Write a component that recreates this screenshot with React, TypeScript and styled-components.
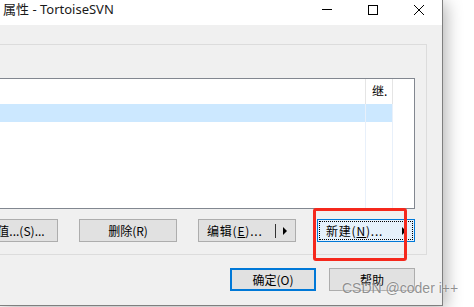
import React from 'react';
import styled, {createGlobalStyle} from 'styled-components';

const GlobalStyle = createGlobalStyle`
  html, body {
    margin: 0;
    padding: 0;
    background: #ffffff;
    overflow: hidden;
  }
  body {
    font-family: "Noto Sans", "Noto Sans CJK SC", sans-serif;
    color: #000;
  }
`

const Screen = styled.div`
  position: relative;
  width: 474px;
  height: 307px;
  overflow: hidden;
  background: #ffffff;
`

const Window = styled.section`
  display: flex;
  flex-direction: column;
  width: 443px;
  height: 306px;
  box-sizing: border-box;
  overflow: hidden;
  background: #f0f0f0;
  border-right: 1px solid #7f7f7f;
  border-bottom: 1px solid #7f7f7f;
  box-shadow: 3px 3px 16px rgba(0, 0, 0, 0.3);
`

const TitleBar = styled.header`
  display: flex;
  align-items: flex-start;
  height: 25px;
  flex-shrink: 0;
  background: #ffffff;
`

const Title = styled.h1`
  flex: 1;
  margin: 0 0 0 3px;
  font-size: 13px;
  font-weight: normal;
  line-height: 19px;
  color: #1a1a1a;
  font-family: "Noto Sans", "Noto Sans CJK SC", sans-serif;
`

const Caption = styled.button`
  display: flex;
  align-items: center;
  justify-content: center;
  width: 46px;
  height: 19px;
  padding: 0;
  border: 0;
  background: transparent;
`

const Body = styled.div`
  display: flex;
  flex-direction: column;
  flex: 1;
  padding: 19px 0 14px 0;
`

const GroupBox = styled.fieldset`
  display: flex;
  flex-direction: column;
  gap: 10px;
  height: 211px;
  box-sizing: border-box;
  margin: 0 15px 0 0;
  padding: 33px 11px 12px 0;
  border: 1px solid #dcdcdc;
  border-left: none;
  min-width: 0;
`

const ListBox = styled.div`
  display: flex;
  flex-direction: column;
  height: 131px;
  box-sizing: border-box;
  background: #ffffff;
  border: 1px solid #828790;
  border-left: none;
`

const GridRow = styled.div<{ $height?: number; $grow?: boolean }>`
  display: grid;
  grid-template-columns: 1fr 27px 21px;
  height: ${p => (p.$height ? `${p.$height}px` : 'auto')};
  flex: ${p => (p.$grow ? 1 : 'none')};
`

const HeaderCell = styled.div<{ $line?: boolean }>`
  display: flex;
  align-items: center;
  padding: 0 0 2px 6px;
  box-sizing: border-box;
  font-size: 12px;
  font-family: "Noto Sans CJK SC", sans-serif;
  border-right: ${p => (p.$line ? '1px solid #e5e5e5' : 'none')};
`

const Cell = styled.div<{ $selected?: boolean; $line?: boolean }>`
  box-sizing: border-box;
  background: ${p => (p.$selected ? '#cce8ff' : 'transparent')};
  border-right: ${p => (p.$line ? '1px solid #e8f0fa' : 'none')};
`

const ButtonRow = styled.div<{ $gap: number; $right?: number; $top?: number }>`
  display: flex;
  justify-content: flex-end;
  gap: ${p => p.$gap}px;
  margin-right: ${p => p.$right ?? 0}px;
  margin-top: ${p => p.$top ?? 0}px;
`

const Button = styled.button<{ $width: number; $tone?: 'default' | 'focus' | 'hot' }>`
  display: flex;
  align-items: center;
  justify-content: center;
  flex-shrink: 0;
  width: ${p => p.$width}px;
  height: 23px;
  box-sizing: border-box;
  padding: 0;
  font-size: 12px;
  font-family: "Noto Sans CJK SC", sans-serif;
  color: #000;
  white-space: nowrap;
  background: ${p => (p.$tone === 'hot' ? '#e5f1fb' : '#e1e1e1')};
  border: ${p =>
    p.$tone === 'focus' ? '2px solid #0078d7' : p.$tone === 'hot' ? '1px solid #0078d7' : '1px solid #adadad'};
  outline: ${p => (p.$tone === 'hot' ? '1px dotted #000' : 'none')};
  outline-offset: -3px;
`

const SplitLabel = styled.span`
  flex: 1;
  text-align: left;
  padding-left: 8px;
  letter-spacing: 0.8px;
`

const SplitBar = styled.span<{ $hidden?: boolean }>`
  width: 1px;
  height: 14px;
  margin-right: 7px;
  background: ${p => (p.$hidden ? 'transparent' : '#333')};
`

const Arrow = styled.span`
  width: 0;
  height: 0;
  margin-right: 8px;
  border-left: 4px solid #000;
  border-top: 4px solid transparent;
  border-bottom: 4px solid transparent;
`

const Annotation = styled.div`
  position: absolute;
  left: 313px;
  top: 208px;
  width: 94px;
  height: 53px;
  box-sizing: border-box;
  border: 3px solid #f5281c;
  border-radius: 3px;
`

const Watermark = styled.div`
  position: absolute;
  left: 342px;
  top: 280px;
  font-family: "Liberation Sans", Arial, sans-serif;
  font-size: 14px;
  line-height: 16px;
  color: rgba(110, 110, 110, 0.75);
  text-shadow: 0 0 2px rgba(255, 255, 255, 0.9);
  white-space: nowrap;
`

function MinimizeIcon() {
  return (
    <svg width="10" height="10" viewBox="0 0 10 10">
      <path d="M0 4.5H10" stroke="#000" strokeWidth="1" />
    </svg>
  )
}

function MaximizeIcon() {
  return (
    <svg width="10" height="10" viewBox="0 0 10 10">
      <rect x="0.5" y="0.5" width="9" height="9" fill="none" stroke="#000" strokeWidth="1" />
    </svg>
  )
}

function CloseIcon() {
  return (
    <svg width="10" height="10" viewBox="0 0 10 10">
      <path d="M0 0L10 10M10 0L0 10" stroke="#000" strokeWidth="1" />
    </svg>
  )
}

const App = () => {
  return (
    <Screen>
      <GlobalStyle/>
      <Window>
        <TitleBar>
          <Title>属性 - TortoiseSVN</Title>
          <Caption><MinimizeIcon/></Caption>
          <Caption><MaximizeIcon/></Caption>
          <Caption><CloseIcon/></Caption>
        </TitleBar>
        <Body>
          <GroupBox>
            <ListBox>
              <GridRow $height={25}>
                <HeaderCell $line/>
                <HeaderCell $line>继.</HeaderCell>
                <HeaderCell/>
              </GridRow>
              <GridRow $height={18}>
                <Cell $selected $line/>
                <Cell $selected $line/>
                <Cell/>
              </GridRow>
              <GridRow $grow>
                <Cell $line/>
                <Cell $line/>
                <Cell/>
              </GridRow>
            </ListBox>
            <ButtonRow $gap={21}>
              <Button $width={98}>设置值...(S)...</Button>
              <Button $width={98}>删除(R)</Button>
              <Button $width={98}>
                <SplitLabel>编辑(<u>E</u>)...</SplitLabel>
                <SplitBar/>
                <Arrow/>
              </Button>
              <Button $width={98} $tone="hot">
                <SplitLabel>新建(<u>N</u>)...</SplitLabel>
                <SplitBar $hidden/>
                <Arrow/>
              </Button>
            </ButtonRow>
          </GroupBox>
          <ButtonRow $gap={13} $right={27} $top={13}>
            <Button $width={86} $tone="focus">确定(O)</Button>
            <Button $width={86}>帮助</Button>
          </ButtonRow>
        </Body>
      </Window>
      <Annotation/>
      <Watermark>CSDN @coder i++</Watermark>
    </Screen>
  );
}

export default App;
